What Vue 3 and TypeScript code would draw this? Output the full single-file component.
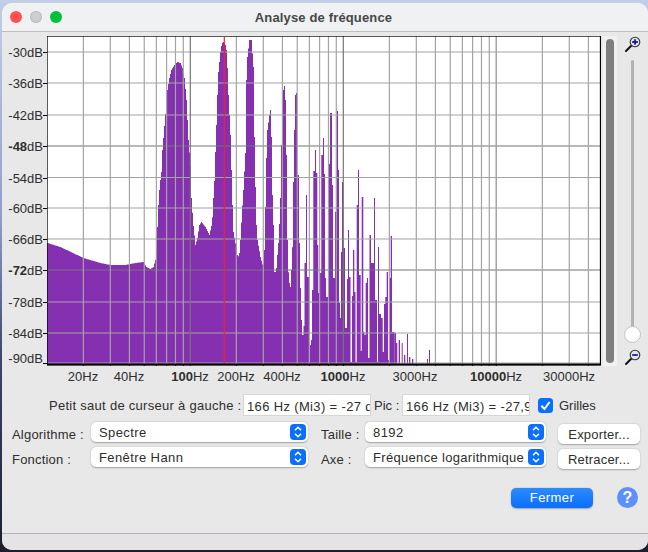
<template>
  <div class="desktop">
    <div class="window">
      <header class="titlebar">
        <div class="lights">
          <span class="light red"></span>
          <span class="light grey"></span>
          <span class="light green"></span>
        </div>
        <h1 class="title">Analyse de fréquence</h1>
      </header>

      <div class="chart-row">
        <div class="y-axis">
          <template v-for="t in dbTicks" :key="t.label">
            <span class="y-label" :style="{ top: (t.labelY ?? t.y) - 36 + 'px' }"><b v-if="t.bold">{{ t.label }}</b><template v-else>{{ t.label }}</template>dB</span>
            <span class="y-tick" :style="{ top: t.y - 36 + 'px' }"></span>
          </template>
        </div>

        <svg class="plot" width="554" height="330" viewBox="47 36 554 330">
          <rect x="47" y="36" width="554" height="330" fill="#fff" />
          <path :d="spectrumPath" fill="#8430b0" />
          <line
            v-for="t in dbTicks"
            :key="'h' + t.label"
            x1="47"
            x2="600"
            :y1="t.y"
            :y2="t.y"
            :stroke="t.bold ? '#757575' : '#a4a4a4'"
            stroke-width="1.2"
          />
          <line
            v-for="x in freqLines"
            :key="'v' + x.pos"
            :x1="x.pos"
            :x2="x.pos"
            y1="36"
            y2="364"
            :stroke="x.major ? '#757575' : '#a4a4a4'"
            stroke-width="1.2"
          />
          <line x1="224.3" x2="224.3" y1="37" y2="364" stroke="#fb1f2a" stroke-width="1.2" />
          <rect x="47" y="36" width="553.5" height="328.5" fill="none" stroke="#000" stroke-width="1.3" />
          <rect x="47" y="363.6" width="554" height="2" fill="#000" />
          <line
            v-for="x in freqLines"
            :key="'t' + x.pos"
            :x1="x.pos"
            :x2="x.pos"
            y1="364"
            y2="366"
            stroke="#000"
          />
        </svg>

        <div class="scrollbar"><div class="thumb"></div></div>

        <div class="zoom-col">
          <svg class="zoom-icon" width="16" height="16" viewBox="0 0 16 16">
            <line x1="1" y1="15" x2="6" y2="10" stroke="#111" stroke-width="2" stroke-linecap="round" />
            <circle cx="10" cy="6" r="4.8" fill="#e6e6ee" stroke="#333" stroke-width="1.1" />
            <path d="M7.2 6h5.6M10 3.2v5.6" stroke="#1a1aa8" stroke-width="1.8" />
          </svg>
          <div class="track"></div>
          <div class="knob"></div>
          <svg class="zoom-icon minus" width="16" height="16" viewBox="0 0 16 16">
            <line x1="1" y1="15" x2="6" y2="10" stroke="#111" stroke-width="2" stroke-linecap="round" />
            <circle cx="10" cy="6" r="4.8" fill="#e6e6ee" stroke="#333" stroke-width="1.1" />
            <path d="M7.2 6h5.6" stroke="#1a1aa8" stroke-width="1.8" />
          </svg>
        </div>
      </div>

      <div class="x-axis">
        <span
          v-for="l in freqLabels"
          :key="l.text"
          class="x-label"
          :style="{ left: l.x - 47 + 'px' }"
        ><b v-if="l.bold">{{ l.text }}</b><template v-else>{{ l.text }}</template>Hz</span>
      </div>

      <div class="cursor-row">
        <label class="cursor-label">Petit saut de curseur à gauche :</label>
        <input class="readout" readonly value="166 Hz (Mi3) = -27 dB" />
        <label class="peak-label">Pic :</label>
        <input class="readout" readonly value="166 Hz (Mi3) = -27,9 dB" />
        <svg class="check" width="15" height="15" viewBox="0 0 15 15">
          <rect width="15" height="15" rx="3.5" fill="#0a6ffa" />
          <path d="M3.4 7.8l3 3.2 5.2-7" fill="none" stroke="#fff" stroke-width="2" />
        </svg>
        <span class="check-label">Grilles</span>
      </div>

      <div class="options">
        <template v-for="row in optionRows" :key="row.left">
          <label class="opt-label">{{ row.left }}</label>
          <div class="select wide">
            <span class="select-text">{{ row.leftValue }}</span>
            <span class="stepper">
              <svg width="10" height="14" viewBox="0 0 10 14">
                <path d="M2 5.3l3-3 3 3M2 8.7l3 3 3-3" fill="none" stroke="#fff" stroke-width="1.5" />
              </svg>
            </span>
          </div>
          <label class="opt-label second">{{ row.right }}</label>
          <div class="select">
            <span class="select-text" :class="{ tight: row.right === 'Axe :' }">{{ row.rightValue }}</span>
            <span class="stepper">
              <svg width="10" height="14" viewBox="0 0 10 14">
                <path d="M2 5.3l3-3 3 3M2 8.7l3 3 3-3" fill="none" stroke="#fff" stroke-width="1.5" />
              </svg>
            </span>
          </div>
          <button class="btn" type="button">{{ row.action }}</button>
        </template>
      </div>

      <div class="footer-row">
        <button class="btn primary" type="button">Fermer</button>
        <span class="help">?</span>
      </div>

      <div class="spacer"></div>
      <div class="statusbar"></div>
    </div>
  </div>
</template>

<script setup lang="ts">
import { computed } from 'vue'

interface DbTick {
  label: string
  y: number
  bold: boolean
  labelY?: number
}

const dbTicks: DbTick[] = [
  { label: '-30', y: 52, bold: false },
  { label: '-36', y: 83, bold: false },
  { label: '-42', y: 115, bold: false },
  { label: '-48', y: 146, bold: true },
  { label: '-54', y: 177.5, bold: false },
  { label: '-60', y: 208, bold: false },
  { label: '-66', y: 239, bold: false },
  { label: '-72', y: 270, bold: true },
  { label: '-78', y: 302, bold: false },
  { label: '-84', y: 333, bold: false },
  { label: '-90', y: 363, bold: false, labelY: 357.5 },
]

// log axis: 100 Hz sits at x=190, one decade is 153px
const hzToX = (hz: number): number => 190.3 + Math.log10(hz / 100) * 153

const freqLines = computed(() => {
  const out: { pos: number; major: boolean }[] = []
  for (const decade of [10, 100, 1000, 10000]) {
    for (let i = 1; i < 10; i++) {
      const hz = decade * i
      if (hz < 20 || hz > 40000) continue
      out.push({ pos: hzToX(hz), major: i === 1 && hz !== 10000 })
    }
  }
  out.push({ pos: hzToX(10000), major: false })
  return out
})

const freqLabels = [
  { text: '20', x: 83, bold: false },
  { text: '40', x: 129, bold: false },
  { text: '100', x: 190, bold: true },
  { text: '200', x: 236, bold: false },
  { text: '400', x: 282, bold: false },
  { text: '1000', x: 343, bold: true },
  { text: '3000', x: 415, bold: false },
  { text: '10000', x: 496, bold: true },
  { text: '30000', x: 569, bold: false },
]

const optionRows = [
  { left: 'Algorithme :', leftValue: 'Spectre', right: 'Taille :', rightValue: '8192', action: 'Exporter...' },
  { left: 'Fonction :', leftValue: 'Fenêtre Hann', right: 'Axe :', rightValue: 'Fréquence logarithmique', action: 'Retracer...' },
]

// top of the curve, x then y, read off the plot
const envelope: [number, number][] = [
  [47, 243], [60, 247], [83, 258], [100, 263], [110, 265], [125, 265], [135, 263], [143, 262],
  [146, 267], [150, 269], [153, 267], [155, 260], [156, 250], [157, 227], [158, 205], [159, 190],
  [160, 180], [161, 172], [162, 150], [165, 114], [167, 90], [169, 78], [171, 70], [174, 65],
  [177, 62], [180, 63], [182, 68], [184, 78], [186, 100], [188, 140], [190, 165], [191, 198],
  [192.7, 223], [195, 245], [197, 238], [199, 225], [201, 222], [205, 227], [209, 235], [211.7, 223],
  [213, 198], [214, 181], [215, 152], [216, 125], [217, 95], [218, 72], [220, 52], [221.5, 43],
  [223, 42], [225, 45], [226, 50], [227, 68], [228, 95], [230, 135], [232, 205], [233, 232],
  [237, 255], [238.7, 257], [240, 240], [241.7, 210], [243, 190], [245, 153], [246, 80], [247, 57],
  [249, 40], [251, 40], [253, 67], [254, 137], [255, 187], [256, 225], [257, 240], [260, 257],
  [262.7, 267], [264, 250], [265, 207], [266, 158], [267, 130], [269, 115], [270, 110], [271, 137],
  [272, 195], [273, 225], [274, 272], [275.7, 272], [276, 268], [277, 255], [278.5, 237], [280, 198],
  [281, 145], [283, 90], [284, 86], [285, 100], [286, 155], [287, 240], [287.5, 267], [289, 283],
  [290, 287], [291, 270], [292.5, 236], [293, 182], [294, 130], [295, 95], [296, 93], [297, 93],
]

// from here on the bars are separate spikes: start, end, top
const spikes: [number, number, number][] = [
  [297, 299, 175], [299, 300, 243], [300, 301, 288], [301, 302, 320], [302, 303.5, 335], [303.5, 304.5, 326],
  [304.5, 306, 263], [306, 307, 195], [307, 309, 277], [310, 311, 345], [311, 312, 340], [312, 313.3, 290],
  [313.3, 315, 171], [315, 316, 150], [316, 317.3, 173], [317.3, 318.3, 245], [318.3, 320, 293], [320, 321.3, 273],
  [321.3, 323, 155], [323, 324, 138], [324, 325, 174], [325, 326, 278], [326, 329, 297], [329, 330, 164],
  [330, 332, 113], [332, 333, 185], [333, 335, 278], [335, 336.7, 212], [336.7, 338, 111], [338, 339, 170],
  [339, 340, 303], [340, 341, 318], [341, 342, 252], [342, 343, 182], [343, 345, 248], [345, 347, 328],
  [347, 348, 279], [348, 349, 230], [349, 350.5, 277], [350.5, 352, 362], [352, 353, 296], [353, 354.3, 250],
  [354.3, 355.5, 292], [355.5, 356.7, 362], [356.7, 358, 205], [358, 359, 170], [359, 360.7, 275], [360.7, 361.7, 351],
  [361.7, 363.3, 197], [363.3, 364.5, 332], [364.5, 365.7, 335], [365.7, 367, 283], [367, 368, 278], [368, 369.5, 358],
  [369.5, 371, 235], [371, 374, 263], [374, 375, 198], [375, 377, 300], [377, 378, 362], [378, 379, 247],
  [379, 381, 314], [381, 382.7, 318], [382.7, 384, 352], [384, 385.3, 304], [385.3, 386.7, 297], [386.7, 388, 272],
  [388, 389.3, 360], [389.3, 390.7, 278], [390.7, 392, 236], [392, 394.5, 332], [394.7, 396, 333], [396, 397.3, 343],
  [398.7, 400, 340], [401.7, 402.7, 343], [404, 405.3, 355], [407, 408, 334], [409, 410.3, 357], [412, 413.3, 359],
  [427, 428, 359], [429, 430, 350],
]

const spectrumPath = computed(() => {
  const bottom = 364
  let d = ''
  let seg = 0
  for (let x = 47; x < 297; x++) {
    while (seg < envelope.length - 2 && envelope[seg + 1][0] <= x) seg++
    const [x0, y0] = envelope[seg]
    const [x1, y1] = envelope[seg + 1]
    const y = y0 + ((x - x0) / (x1 - x0)) * (y1 - y0)
    d += `M${x} ${bottom}V${y.toFixed(1)}H${x + 1}V${bottom}Z`
  }
  for (const [a, b, y] of spikes) {
    d += `M${a} ${bottom}V${y}H${b}V${bottom}Z`
  }
  return d
})
</script>

<style scoped>
.desktop {
  width: 648px;
  height: 552px;
  padding: 3px 0 2px 2px;
  box-sizing: border-box;
  display: flex;
  overflow: hidden;
  background: linear-gradient(#c3cfe6 0%, #8e9ccd 40%, #3c4470 65%, #1c1e2c 100%);
  font-family: "Liberation Sans", Arial, sans-serif;
  font-size: 13px;
  color: #2e2e2e;
}

.window {
  flex: 1;
  min-width: 0;
  display: flex;
  flex-direction: column;
  background: #e8e8e8;
  border-radius: 10px;
  overflow: hidden;
}

.titlebar {
  position: relative;
  height: 28px;
  flex: none;
  display: flex;
  align-items: center;
  justify-content: center;
  background: #eff1f2;
  border-bottom: 1px solid #bcbcbc;
}

.lights {
  position: absolute;
  left: 8px;
  top: 8px;
  display: flex;
  gap: 8px;
}

.light {
  width: 12px;
  height: 12px;
  border-radius: 50%;
}

.light.red { background: #ff5250; }
.light.grey { background: #cdcfcf; box-shadow: inset 0 0 0 1px #bdbfbf; }
.light.green { background: #00c13a; }

.title {
  margin: 0 0 0 -3px;
  font-size: 13px;
  font-weight: 700;
  letter-spacing: 0.15px;
  color: #474747;
}

.chart-row {
  display: flex;
  margin-top: 4px;
  height: 330px;
  flex: none;
}

.y-axis {
  position: relative;
  width: 45px;
  flex: none;
}

.y-label {
  position: absolute;
  right: 4px;
  transform: translateY(-50%);
  line-height: 15px;
  white-space: nowrap;
}

.y-tick {
  position: absolute;
  right: 0;
  width: 4px;
  height: 1px;
  background: #000;
}

.plot {
  display: block;
  flex: none;
}

.scrollbar {
  width: 14px;
  margin-left: 2px;
  flex: none;
  padding: 3px;
  box-sizing: border-box;
  background: #f1f1f1;
}

.thumb {
  height: 100%;
  width: 8px;
  border-radius: 4px;
  background: #7f7f7f;
}

.zoom-col {
  flex: 1;
  display: flex;
  flex-direction: column;
  align-items: center;
  padding-right: 1px;
}

.zoom-icon {
  flex: none;
  margin-left: 1px;
}

.track {
  width: 3px;
  height: 266px;
  margin-top: 8px;
  background: #b2b2b2;
  border-radius: 2px 2px 0 0;
}

.knob {
  width: 15px;
  height: 15px;
  flex: none;
  border-radius: 50%;
  background: #fff;
  border: 1px solid #c2c2c2;
}

.zoom-icon.minus {
  margin-top: 6px;
}

.x-axis {
  position: relative;
  height: 22px;
  margin-left: 45px;
  flex: none;
}

.x-label {
  position: absolute;
  top: 3px;
  transform: translateX(-50%);
  line-height: 16px;
  white-space: nowrap;
}

.cursor-row {
  display: flex;
  align-items: center;
  height: 22px;
  margin-top: 6px;
  padding-left: 47px;
  flex: none;
}

.cursor-label {
  width: 194px;
  white-space: nowrap;
  flex: none;
  letter-spacing: 0.28px;
}

.readout {
  width: 128px;
  height: 22px;
  box-sizing: border-box;
  flex: none;
  margin: 0;
  padding: 2px 0 0 3px;
  background: #fff;
  border: 1px solid #d6d6d6;
  border-radius: 0;
  outline: none;
  font: inherit;
  color: inherit;
  letter-spacing: 0.35px;
}

.peak-label {
  width: 31px;
  padding-left: 3px;
  box-sizing: border-box;
  flex: none;
}

.check {
  margin-left: 8px;
  flex: none;
}

.check-label {
  margin-left: 6px;
}

.options {
  display: grid;
  grid-template-columns: 79px 217px 57px 181px auto;
  row-gap: 3px;
  align-items: start;
  margin-top: 6px;
  padding-left: 10px;
  flex: none;
}

.opt-label {
  letter-spacing: 0.2px;
  padding-top: 5px;
  line-height: 15px;
  white-space: nowrap;
}

.opt-label.second {
  padding-left: 13px;
}

.select {
  height: 20px;
  display: flex;
  align-items: center;
  justify-content: space-between;
  padding: 0 2px 0 8px;
  box-sizing: border-box;
  background: #fff;
  border-radius: 5px;
  box-shadow: 0 0.5px 1.5px rgba(0, 0, 0, 0.3);
}

.select-text {
  letter-spacing: 0.4px;
  white-space: nowrap;
}

.select-text.tight {
  letter-spacing: 0.32px;
}

.stepper {
  width: 16px;
  height: 16px;
  flex: none;
  display: flex;
  align-items: center;
  justify-content: center;
  border-radius: 4px;
  background: #0a6ffa;
}

.btn {
  width: 82px;
  height: 20px;
  padding: 0;
  border: none;
  border-radius: 5px;
  background: #fff;
  box-shadow: 0 0.5px 1.5px rgba(0, 0, 0, 0.3);
  font: inherit;
  color: #2e2e2e;
  letter-spacing: 0.2px;
  margin: 2px 0 0 12px;
}

.btn.primary {
  margin: 0;
  color: #fff;
  font-weight: 500;
  background: linear-gradient(#2b8bff, #0a6ffa);
  letter-spacing: 0.4px;
}

.footer-row {
  display: flex;
  align-items: center;
  justify-content: flex-end;
  margin-top: 18px;
  padding-right: 10px;
  flex: none;
}

.help {
  width: 21px;
  height: 21px;
  margin-left: 24px;
  border-radius: 50%;
  background: #5f8ffb;
  color: #fff;
  font-size: 16px;
  font-weight: 700;
  line-height: 21px;
  text-align: center;
}

.spacer {
  flex: 1;
}

.statusbar {
  height: 16px;
  flex: none;
  background: #e6e3e6;
  border-top: 1px solid #b4b4b4;
}
</style>

<style>
html, body {
  background: #1c1e2c;
}
</style>
